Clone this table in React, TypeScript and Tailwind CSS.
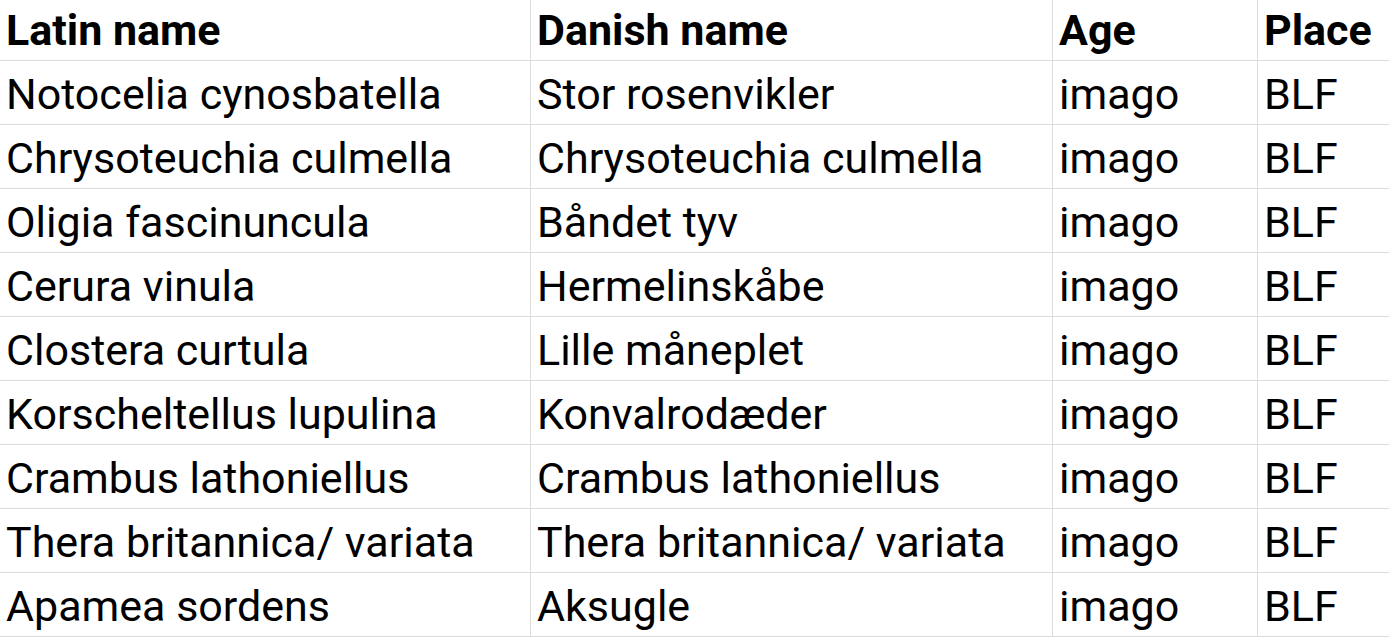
const rows: [string, string, string, string][] = [
  ["Notocelia cynosbatella", "Stor rosenvikler", "imago", "BLF"],
  ["Chrysoteuchia culmella", "Chrysoteuchia culmella", "imago", "BLF"],
  ["Oligia fascinuncula", "Båndet tyv", "imago", "BLF"],
  ["Cerura vinula", "Hermelinskåbe", "imago", "BLF"],
  ["Clostera curtula", "Lille måneplet", "imago", "BLF"],
  ["Korscheltellus lupulina", "Konvalrodæder", "imago", "BLF"],
  ["Crambus lathoniellus", "Crambus lathoniellus", "imago", "BLF"],
  ["Thera britannica/ variata", "Thera britannica/ variata", "imago", "BLF"],
  ["Apamea sordens", "Aksugle", "imago", "BLF"],
];

const cols = "grid grid-cols-[531px_522px_205px_1fr]";
const cell = "flex items-end pl-[6px] pb-[8px] border-r border-[#dcdcdc] overflow-hidden whitespace-nowrap";

export default function App() {
  return (
    <div className="w-[1389px] h-[638px] overflow-hidden bg-white text-black font-['Roboto',sans-serif]">
      <div className={`${cols} h-[61px] border-b border-[#dcdcdc] font-bold text-[43px] leading-none`}>
        <div className={cell}>Latin name</div>
        <div className={cell}>Danish name</div>
        <div className={cell}>Age</div>
        <div className={`${cell} border-r-0`}>Place</div>
      </div>
      {rows.map((r, i) => (
        <div key={i} className={`${cols} h-[64px] border-b border-[#dcdcdc] text-[43px] leading-none`}>
          <div className={cell}>{r[0]}</div>
          <div className={cell}>{r[1]}</div>
          <div className={cell}>{r[2]}</div>
          <div className={`${cell} border-r-0`}>{r[3]}</div>
        </div>
      ))}
    </div>
  );
}
